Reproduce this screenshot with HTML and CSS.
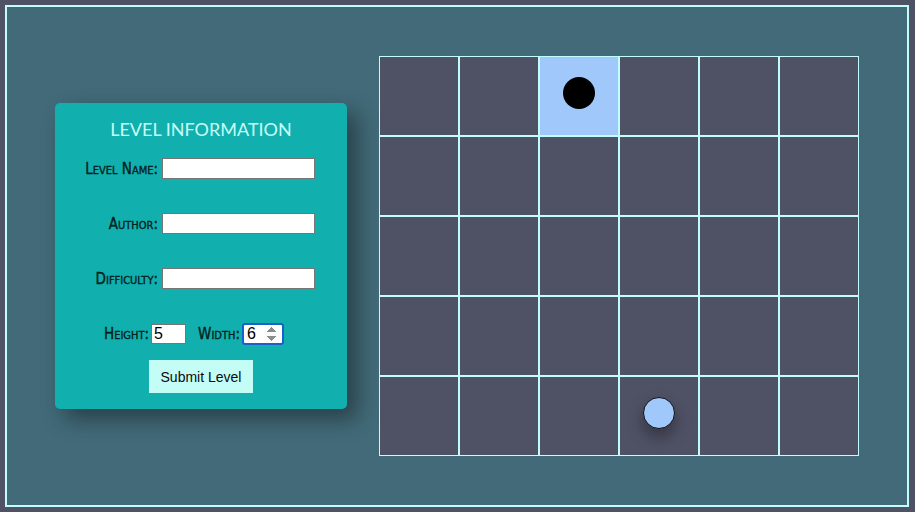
FILE: index.html
```html
<!DOCTYPE html>
<html>
<head>
<meta charset="utf-8">
<link rel="stylesheet" href="styles.css">
</head>
<body>
<div class="frame">
  <form class="panel">
    <h1 class="title">LEVEL INFORMATION</h1>
    <div class="row"><label class="lbl">Level Name:</label><input class="txt" type="text"></div>
    <div class="row"><label class="lbl">Author:</label><input class="txt" type="text"></div>
    <div class="row"><label class="lbl">Difficulty:</label><input class="txt" type="text"></div>
    <div class="dims">
      <label class="lbl">Height:</label><input class="num" type="number" value="5">
      <label class="lbl lbl-w">Width:</label><input class="num num-w" type="number" value="6" autofocus>
    </div>
    <button class="submit" type="button">Submit Level</button>
  </form>
  <div class="board">
    <div class="cell"></div><div class="cell"></div><div class="cell on"><span class="piece black"></span></div><div class="cell"></div><div class="cell"></div><div class="cell"></div>
    <div class="cell"></div><div class="cell"></div><div class="cell"></div><div class="cell"></div><div class="cell"></div><div class="cell"></div>
    <div class="cell"></div><div class="cell"></div><div class="cell"></div><div class="cell"></div><div class="cell"></div><div class="cell"></div>
    <div class="cell"></div><div class="cell"></div><div class="cell"></div><div class="cell"></div><div class="cell"></div><div class="cell"></div>
    <div class="cell"></div><div class="cell"></div><div class="cell"></div><div class="cell"><span class="piece blue"></span></div><div class="cell"></div><div class="cell"></div>
  </div>
</div>
</body>
</html>
```

FILE: styles.css
```css
html, body {
  margin: 0;
  padding: 0;
  background: #4f5165;
}
body {
  padding: 5px;
  font-family: "Liberation Sans", Arial, sans-serif;
}
.frame {
  width: 900px;
  height: 498px;
  border: 2px solid #c0fdfb;
  background: #426a78;
  display: flex;
  align-items: center;
  justify-content: center;
  gap: 32px;
}
.panel {
  width: 292px;
  height: 306px;
  box-sizing: border-box;
  background: #11b0ae;
  border-radius: 5px;
  box-shadow: 10px 10px 22px rgba(0, 0, 0, 0.4);
  padding-top: 15px;
  display: flex;
  flex-direction: column;
}
.title {
  margin: 0 0 18px 0;
  font-family: Lato, "Open Sans", sans-serif;
  font-weight: 400;
  font-size: 18px;
  line-height: 22px;
  color: #c6fcf7;
  text-align: center;
}
.row {
  display: flex;
  justify-content: flex-end;
  align-items: center;
  padding-right: 32px;
  height: 21px;
  margin-bottom: 34px;
}
.lbl {
  font-family: "Liberation Sans Narrow", "DejaVu Sans Condensed", sans-serif;
  font-variant: small-caps;
  font-weight: 400;
  font-size: 15px;
  color: #031f20;
  -webkit-text-stroke: 0.35px #031f20;
  margin-right: 4px;
}
.txt {
  width: 153px;
  height: 21px;
  box-sizing: border-box;
  border: 1px solid #767676;
  padding: 1px 2px;
  font-size: 13px;
  margin: 0;
}
.dims {
  display: flex;
  align-items: center;
  padding-left: 49px;
  height: 21px;
  margin-bottom: 16px;
}
.dims .lbl { margin-right: 2px; }
.lbl-w { margin-left: 12px; }
.num {
  width: 35px;
  height: 20px;
  box-sizing: border-box;
  border: 1px solid #767676;
  padding: 0 2px;
  font-family: "Liberation Sans", Arial, sans-serif;
  font-size: 16px;
  color: #000;
  background: #fff;
  margin: 0;
}
.num-w {
  width: 42px;
  height: 22px;
  border: 2px solid #1a5fcb;
  border-radius: 3px;
  box-shadow: inset 0 0 0 1px #fff;
  padding: 0 3px;
  outline: none;
}
.num-w:focus {
  outline: none;
}
.submit {
  align-self: center;
  width: 104px;
  height: 33px;
  border: none;
  background: #c4fcf6;
  color: #0a0a0a;
  font-family: "Liberation Sans", Arial, sans-serif;
  font-size: 14px;
  padding: 0;
}
.board {
  display: grid;
  grid-template-columns: repeat(6, 80px);
  grid-auto-rows: 80px;
}
.cell {
  box-sizing: border-box;
  border: 1px solid #c0fdfb;
  background: #4f5165;
  display: flex;
  align-items: center;
  justify-content: center;
  padding-bottom: 6px;
}
.cell.on {
  background: #a0c8fa;
}
.piece {
  display: block;
  width: 32px;
  height: 32px;
  border-radius: 50%;
  box-sizing: border-box;
}
.piece.black {
  background: #000;
}
.piece.blue {
  background: #a0c8fa;
  border: 1px solid #111;
  box-shadow: 0 8px 16px rgba(0, 0, 0, 0.35);
}
```
